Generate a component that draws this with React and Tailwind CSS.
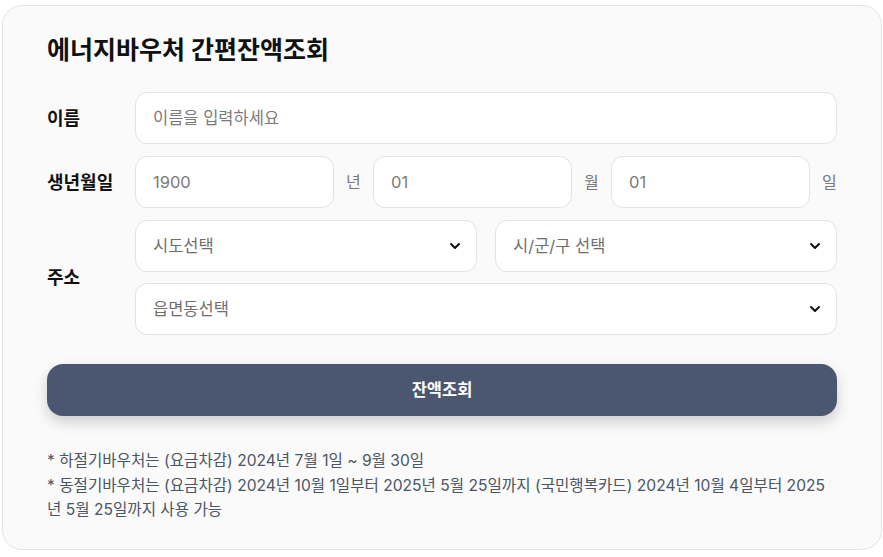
import { ChevronDown } from "lucide-react";

function TextBox({ placeholder, className = "" }) {
  return (
    <input
      placeholder={placeholder}
      className={`h-[52px] min-w-0 rounded-[12px] border border-[#e2e2e2] bg-white px-[17px] text-[16.5px] text-[#222] placeholder:text-[#7a7a7a] outline-none ${className}`}
    />
  );
}

function SelectBox({ label, className = "" }) {
  return (
    <div
      className={`flex h-[52px] items-center justify-between rounded-[12px] border border-[#e2e2e2] bg-white pl-[17px] pr-[13px] ${className}`}>
      <span className="text-[16.5px] text-[#6f6f6f]">{label}</span>
      <ChevronDown size={16} strokeWidth={3} className="text-[#111]" />
    </div>
  );
}

export default function App() {
  return (
    <div
      className="min-h-screen bg-white pl-[2px] pt-[5px]"
      style={{ fontFamily: "Inter, 'Noto Sans CJK KR', sans-serif" }}>
      <div className="w-[880px] rounded-[20px] border border-[#e4e4e4] bg-[#fafafa] px-[44px] pt-[28px] pb-[26px]">
        <h1 className="text-[25px] font-bold leading-[32px] text-[#111]">
          에너지바우처 간편잔액조회
        </h1>

        <div className="mt-[26px] flex flex-col gap-[12px]">
          {/* 이름 */}
          <div className="flex items-center">
            <label className="w-[88px] shrink-0 text-[18px] font-bold text-[#111]">이름</label>
            <TextBox placeholder="이름을 입력하세요" className="flex-1" />
          </div>

          {/* 생년월일 */}
          <div className="flex items-center">
            <label className="w-[88px] shrink-0 text-[18px] font-bold text-[#111]">생년월일</label>
            <div className="flex min-w-0 flex-1 items-center gap-[12px]">
              <TextBox placeholder="1900" className="w-[199px] shrink-0" />
              <span className="w-[15px] shrink-0 text-[16px] text-[#777]">년</span>
              <TextBox placeholder="01" className="w-[199px] shrink-0" />
              <span className="w-[15px] shrink-0 text-[16px] text-[#777]">월</span>
              <TextBox placeholder="01" className="w-[199px] shrink-0" />
              <span className="w-[15px] shrink-0 text-[16px] text-[#777]">일</span>
            </div>
          </div>

          {/* 주소 */}
          <div className="flex items-center">
            <label className="w-[88px] shrink-0 text-[18px] font-bold text-[#111]">주소</label>
            <div className="flex flex-1 flex-col gap-[11px]">
              <div className="flex gap-[18px]">
                <SelectBox label="시도선택" className="flex-1" />
                <SelectBox label="시/군/구 선택" className="flex-1" />
              </div>
              <SelectBox label="읍면동선택" />
            </div>
          </div>
        </div>

        <button className="mt-[29px] h-[52px] w-full rounded-[16px] bg-[#4b5670] text-[16.5px] font-bold text-white shadow-[0_6px_14px_rgba(0,0,0,0.18)]">
          잔액조회
        </button>

        <div className="mt-[33px] text-[15.6px] leading-[24.5px] text-[#4b5563]">
          <p>* 하절기바우처는 (요금차감) 2024년 7월 1일 ~ 9월 30일</p>
          <p>
            * 동절기바우처는 (요금차감) 2024년 10월 1일부터 2025년 5월 25일까지 (국민행복카드) 2024년 10월 4일부터 2025년 5월 25일까지 사용 가능
          </p>
        </div>
      </div>
    </div>
  );
}
